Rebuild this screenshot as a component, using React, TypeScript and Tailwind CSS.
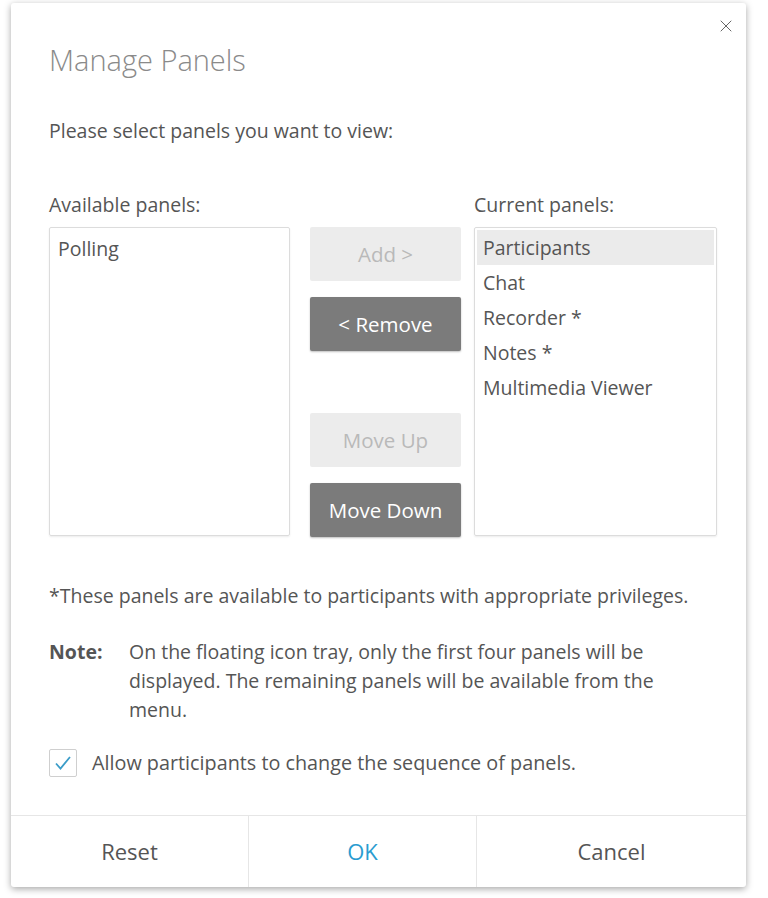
import { X } from "lucide-react";

const current = ["Participants", "Chat", "Recorder *", "Notes *", "Multimedia Viewer"];

function PanelButton({ label, enabled }: { label: string; enabled: boolean }) {
  return (
    <button
      className={
        enabled
          ? "h-[54px] w-full rounded-[2px] bg-[#7b7b7b] text-[20.5px] text-white shadow-[0_1px_2px_rgba(0,0,0,0.25)]"
          : "h-[54px] w-full rounded-[2px] bg-[#ececec] text-[20.5px] text-[#b9b9b9]"
      }
    >
      {label}
    </button>
  );
}

export default function App() {
  return (
    <div
      className="min-h-[898px] bg-white pt-[3px] pl-[11px]"
      style={{ fontFamily: '"Open Sans", "Noto Sans", Arial, sans-serif' }}
    >
      <div className="relative flex h-[884px] w-[735px] flex-col rounded-[3px] bg-white text-[#555] shadow-[0_2px_7px_rgba(0,0,0,0.35)]">
        <button className="absolute right-[10px] top-[13px] text-[#666]">
          <X size={20} strokeWidth={1.2} />
        </button>

        <div className="flex flex-col pl-[38px] pr-[29px] pt-[40px]">
          <h1 className="text-[29px] font-light leading-[34px] text-[#8a8a8a]">Manage Panels</h1>
          <p className="mt-[42px] text-[19.5px] leading-[24px]">Please select panels you want to view:</p>

          <div className="mt-[50px] flex">
            <div className="w-[241px]">
              <div className="text-[19.5px] leading-[24px]">Available panels:</div>
              <div className="mt-[10px] h-[309px] rounded-[2px] border border-[#dcdcdc] pt-[3px] shadow-[0_1px_2px_rgba(0,0,0,0.08)]">
                <div className="flex h-[35px] items-center px-[8px] text-[19.5px] text-[#555]">Polling</div>
              </div>
            </div>

            <div className="ml-[20px] mt-[34px] flex w-[151px] flex-col">
              <PanelButton label="Add >" enabled={false} />
              <div className="mt-[16px]">
                <PanelButton label="< Remove" enabled />
              </div>
              <div className="mt-[62px]">
                <PanelButton label="Move Up" enabled={false} />
              </div>
              <div className="mt-[16px]">
                <PanelButton label="Move Down" enabled />
              </div>
            </div>

            <div className="ml-[13px] w-[243px]">
              <div className="text-[19.5px] leading-[24px]">Current panels:</div>
              <div className="mt-[10px] h-[309px] rounded-[2px] border border-[#dcdcdc] px-[2px] pt-[2px] shadow-[0_1px_2px_rgba(0,0,0,0.08)]">
                {current.map((p, i) => (
                  <div
                    key={p}
                    className={
                      i === 0
                        ? "flex h-[35px] items-center bg-[#ebebeb] px-[6px] text-[19.5px] text-[#555]"
                        : "flex h-[35px] items-center px-[6px] text-[19.5px] text-[#555]"
                    }
                  >
                    {p}
                  </div>
                ))}
              </div>
            </div>
          </div>

          <p className="mt-[47px] whitespace-nowrap text-[19.5px] leading-[24px]">
            *These panels are available to participants with appropriate privileges.
          </p>

          <div className="mt-[29px] flex text-[19.5px] leading-[29px]">
            <span className="w-[80px] shrink-0 font-bold text-[#555]">Note:</span>
            <span className="w-[560px]">
              On the floating icon tray, only the first four panels will be displayed. The remaining panels will be
              available from the menu.
            </span>
          </div>

          <label className="mt-[24px] flex items-center gap-[15px] text-[19.8px]">
            <span className="flex h-[28px] w-[28px] items-center justify-center rounded-[2px] border border-[#cfcfcf] bg-white">
              <svg width="18" height="16" viewBox="0 0 18 16" fill="none">
                <path d="M2 8.5 L6.5 13.5 L16 2" stroke="#3a9cc8" strokeWidth="1.8" />
              </svg>
            </span>
            Allow participants to change the sequence of panels.
          </label>
        </div>

        <div className="mt-auto grid h-[72px] grid-cols-[237px_228px_1fr] border-t border-[#e6e6e6] text-[22px]">
          <button className="text-[#555]">Reset</button>
          <button className="border-l border-[#e6e6e6] text-[#2a9cd0]">OK</button>
          <button className="border-l border-[#e6e6e6] text-[#555]">Cancel</button>
        </div>
      </div>
    </div>
  );
}
